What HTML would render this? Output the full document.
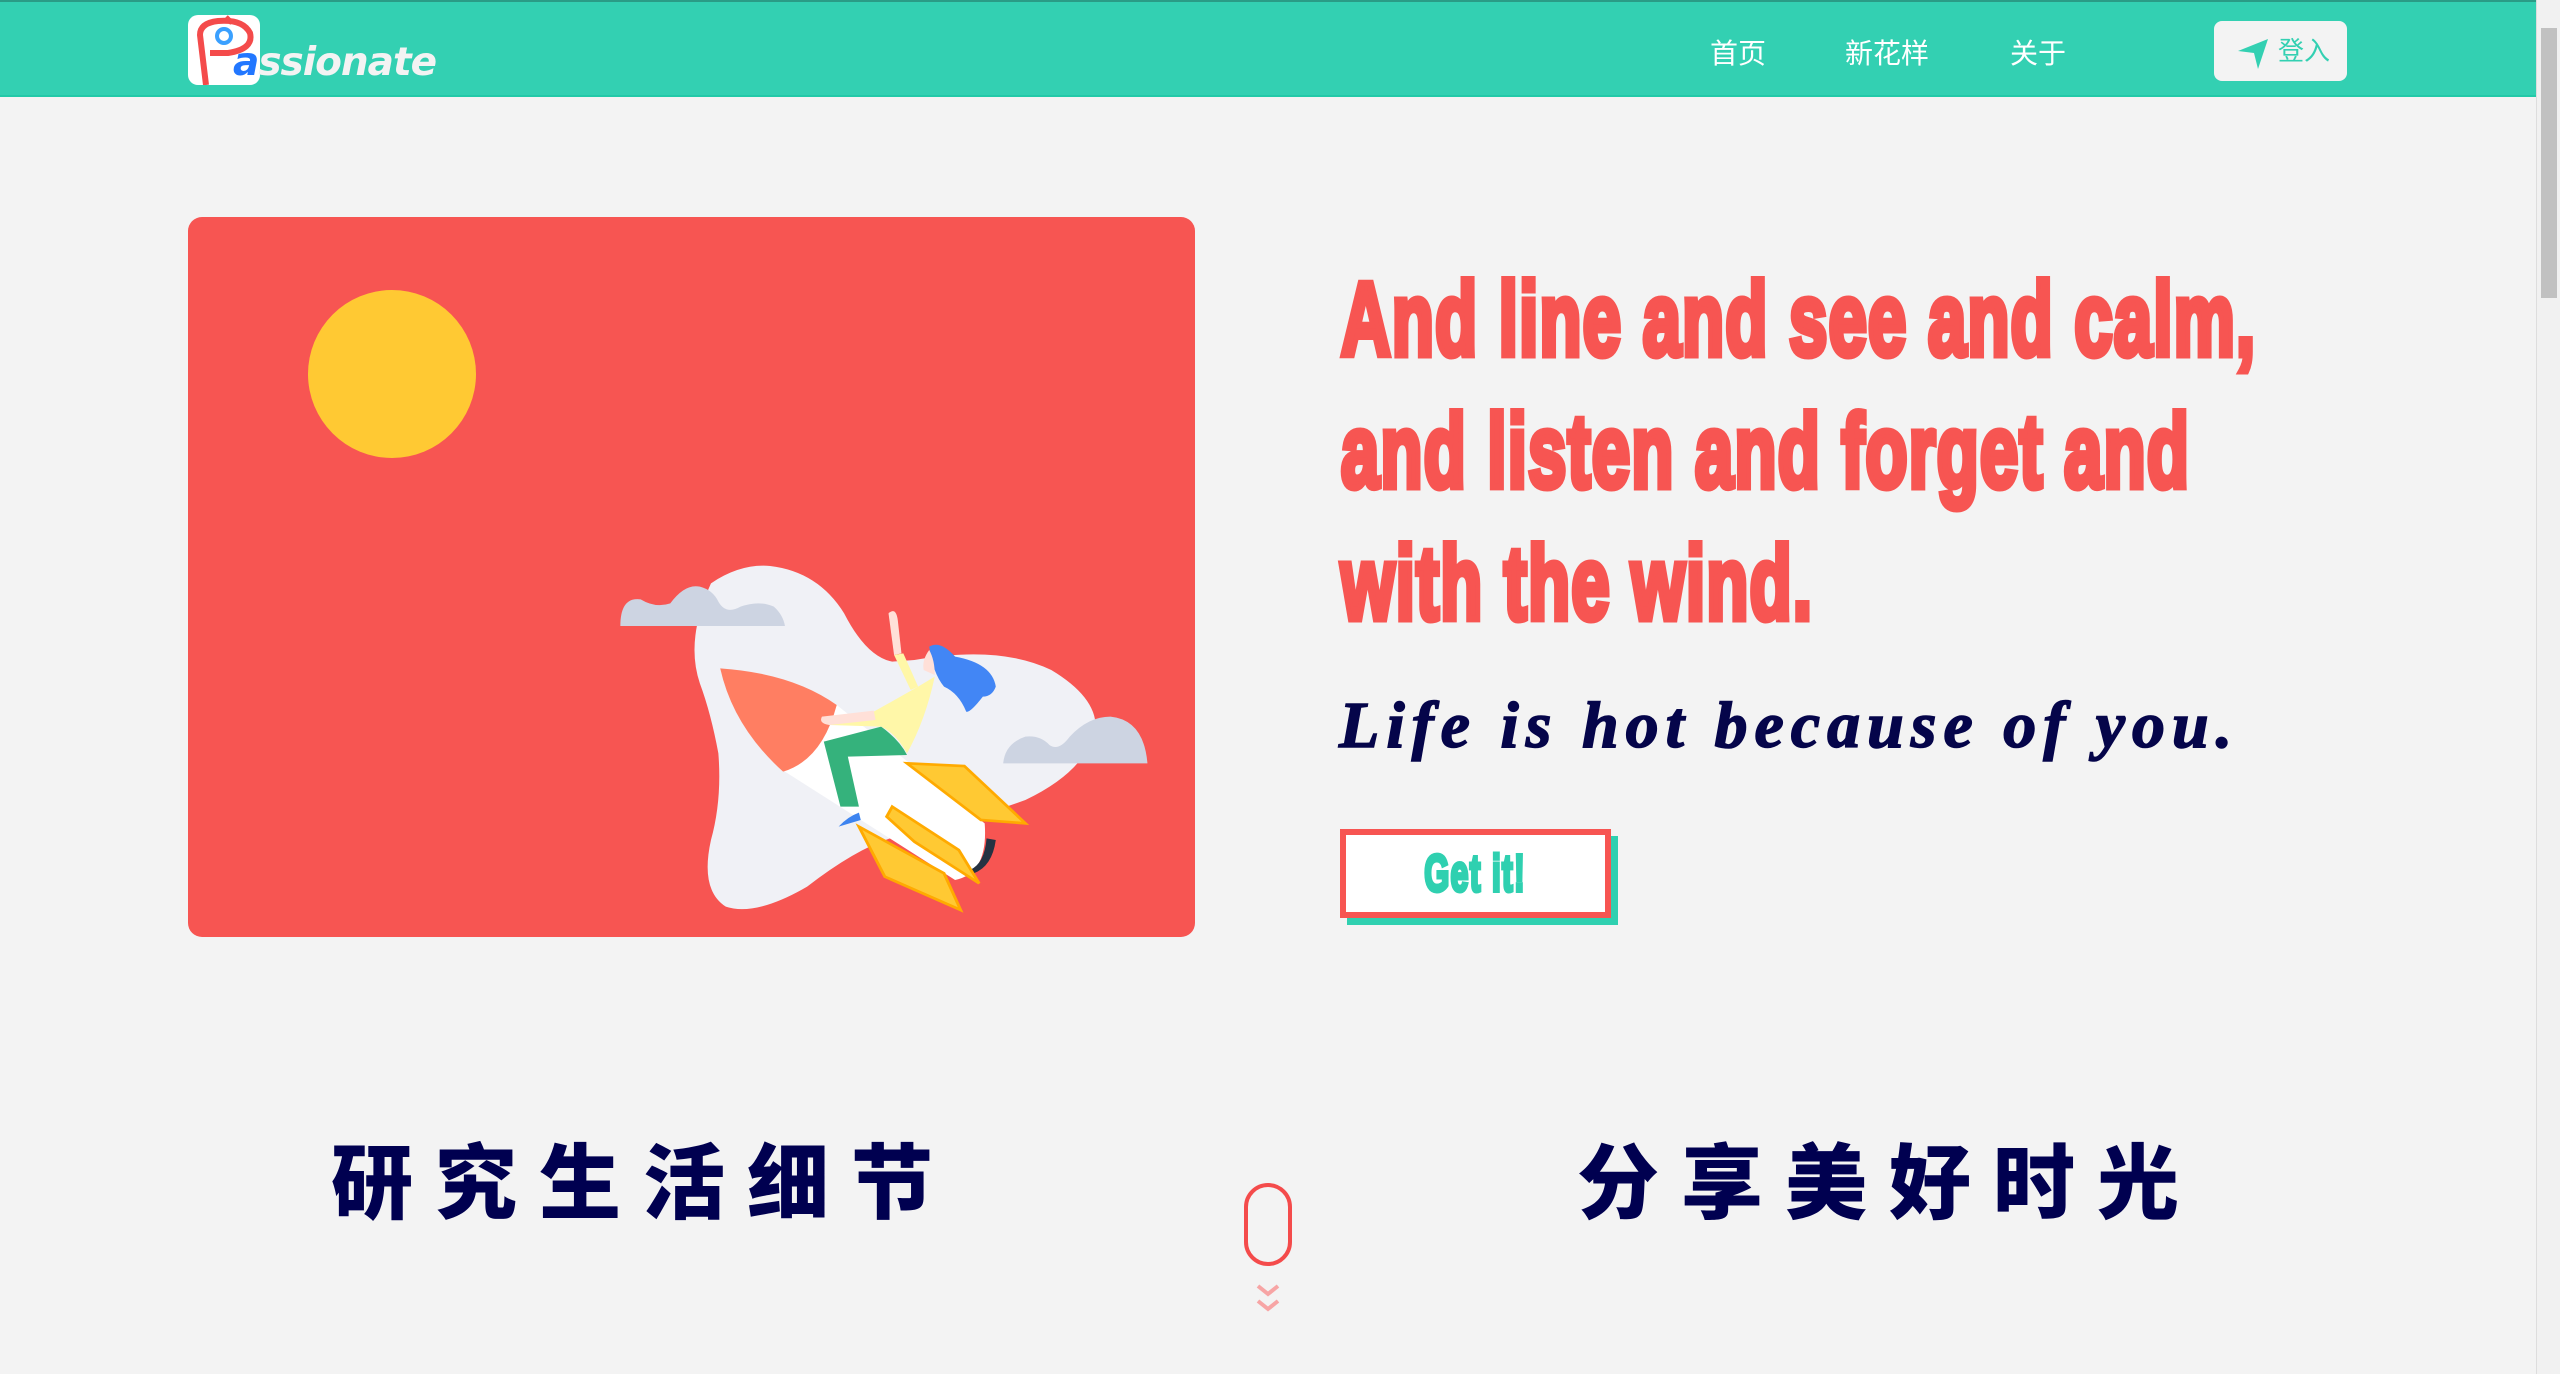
<!DOCTYPE html>
<html><head><meta charset="utf-8"><style>
*{margin:0;padding:0;box-sizing:border-box}
html,body{width:2560px;height:1374px;overflow:hidden;background:#f3f3f3;font-family:"Liberation Sans","Noto Sans CJK SC",sans-serif}
.hdr{position:absolute;left:0;top:0;width:2536px;height:97px;background:#33d0b2;border-top:2px solid #2a9c86;border-bottom:2px solid #22c9a8}
.sb{position:absolute;right:0;top:0;width:24px;height:1374px;background:#f1f1f1;border-left:1px solid #ddd}
.sb i{position:absolute;left:4px;top:28px;width:16px;height:270px;background:#c1c1c1}
.logo{position:absolute;left:188px;top:13px;width:72px;height:70px;background:#fff;border-radius:10px}
.lt{position:absolute;left:233px;top:38px;font-size:39px;font-weight:bold;font-style:italic;color:#f3f3f3;font-family:"DejaVu Sans",sans-serif;letter-spacing:-1px}
.lt b{color:#2277ff}
.nav{position:absolute;top:30px;font-size:28px;color:#fff}
.login{position:absolute;left:2214px;top:19px;width:133px;height:60px;background:#f3f3f3;border-radius:8px;color:#33d0b2;font-size:26px;line-height:60px;padding-left:64px}
.card{position:absolute;left:188px;top:217px;width:1007px;height:720px;background:#f75552;border-radius:14px;overflow:hidden}
.h1{position:absolute;left:1341px;top:254px;font-size:104px;font-weight:900;color:#f75552;line-height:132px;transform:scaleX(0.66);transform-origin:0 0;white-space:nowrap;letter-spacing:2px;-webkit-text-stroke:7px #f75552}
.sub{position:absolute;left:1339px;top:688px;font-family:"Liberation Serif",serif;font-style:italic;font-weight:bold;font-size:66px;color:#05054a;letter-spacing:7px;white-space:nowrap;-webkit-text-stroke:1.5px #05054a}
.btnS{position:absolute;left:1347px;top:836px;width:271px;height:89px;background:#2fd0b0}
.btn{position:absolute;left:1340px;top:829px;width:271px;height:89px;background:#fff;border:6px solid #f75552;text-align:center;color:#2fd0b0;font-size:52px;font-weight:900;line-height:78px}
.btn span{display:inline-block;transform:scaleX(0.62);-webkit-text-stroke:4px #2fd0b0;letter-spacing:2px}
.cn{position:absolute;top:1117px;font-size:82px;font-weight:900;color:#000050;letter-spacing:22px;white-space:nowrap}
.mouse{position:absolute;left:1244px;top:1183px;width:48px;height:83px;border:4px solid #f44b4b;border-radius:24px}
</style></head><body>
<div class="hdr">
<div class="logo"><svg width="72" height="70" viewBox="0 0 72 70"><path d="M18 70 L12 20 Q12 8 30 6 Q55 4 62 18 Q66 34 40 38 L22 38" fill="none" stroke="#f44b4b" stroke-width="6"/><path d="M38 2 l6 6" stroke="#f44b4b" stroke-width="5"/><circle cx="36" cy="21" r="7" fill="none" stroke="#3aa0ff" stroke-width="4"/></svg></div>
<div class="lt"><b>a</b>ssionate</div>
<div class="nav" style="left:1710px">首页</div>
<div class="nav" style="left:1845px">新花样</div>
<div class="nav" style="left:2010px">关于</div>
<div class="login"><svg style="position:absolute;left:24px;top:18px" width="30" height="30" viewBox="0 0 30 30"><path d="M0 12 L30 0 L20 30 L16 14 Z" fill="#33d0b2"/></svg>登入</div>
</div>
<div class="sb"><i></i></div>
<div class="card">
<svg width="1007" height="720" viewBox="0 0 1007 720"><circle cx="204" cy="157" r="84" fill="#ffc933"/></svg>
<svg style="position:absolute;left:412px;top:323px" width="580" height="380" viewBox="0 0 1568 1140" preserveAspectRatio="none">
<path d="M300 130 Q380 70 460 78 Q590 95 660 220 Q720 350 790 365 L850 360 Q1080 315 1220 390 Q1340 470 1340 560 Q1320 690 1150 780 Q950 860 800 890 Q700 920 560 1040 Q420 1130 340 1100 Q270 1050 300 900 Q330 780 320 640 Q300 520 270 430 Q230 300 300 130Z" fill="#f0f1f6"/>
<path d="M55 258 Q55 170 110 178 Q150 205 190 190 Q230 130 270 140 Q305 150 320 185 Q340 225 380 200 Q430 180 470 200 Q495 225 500 258Z" fill="#cdd4e2"/>
<path d="M1090 670 Q1095 610 1150 590 Q1190 585 1215 615 Q1240 635 1270 590 Q1320 530 1380 530 Q1470 540 1480 670Z" fill="#cdd4e2"/>
<path d="M640 495 L1040 850 Q1050 1000 960 1020 L500 695 Q560 560 640 495Z" fill="#fff"/>
<path d="M325 385 Q520 400 640 495 Q600 660 495 695 Q360 560 325 385Z" fill="#ff7e62"/>
<path d="M1010 1000 Q1060 980 1070 900 L1045 895 Q1040 970 1000 990Z" fill="#253242"/>
<path d="M830 670 L985 678 L1150 850 L1030 840Z" fill="#ffc933" stroke="#ffaa00" stroke-width="8"/>
<path d="M700 860 L930 1000 L975 1110 L770 1010Z" fill="#ffc933" stroke="#ffaa00" stroke-width="8"/>
<path d="M790 800 L970 930 L1025 1030 L850 905 L775 830Z" fill="#ffc933" stroke="#ffaa00" stroke-width="8"/>
<path d="M605 605 L760 560 Q810 600 830 645 L670 650 L700 800 L650 800Z" fill="#35b27c"/>
<path d="M645 860 Q670 830 700 818 L705 840Z" fill="#3d84f0"/>
<path d="M600 540 L740 515 L860 440 L905 410 Q880 540 830 640 Q800 580 760 560 L620 555Z" fill="#fff7a8"/>
<path d="M600 530 L740 512 L745 540 L620 555 Q590 550 600 530Z" fill="#ffe0d8"/>
<path d="M780 220 Q800 200 805 240 L815 340 L795 345Z" fill="#ffe0d8"/>
<path d="M795 345 L820 340 L860 440 L840 450Z" fill="#fff7a8"/>
<path d="M890 320 Q920 300 960 350 Q1060 370 1070 440 Q1060 470 1035 470 Q1000 520 990 515 Q970 460 930 440 Q900 400 890 320Z" fill="#4286f5"/>
<path d="M890 330 Q870 360 875 390 L905 405 Q905 360 890 330Z" fill="#ffe0d8"/>
</svg>
</div>
<div class="h1">And line and see and calm,<br>and listen and forget and<br>with the wind.</div>
<div class="sub">Life is hot because of you.</div>
<div class="btnS"></div>
<div class="btn"><span>Get it!</span></div>
<div class="cn" style="left:331px">研究生活细节</div>
<div class="cn" style="left:1577px">分享美好时光</div>
<div class="mouse"></div>
<svg style="position:absolute;left:1256px;top:1284px" width="24" height="32" viewBox="0 0 24 32"><path d="M2 2 L12 10 L22 2 M2 17 L12 25 L22 17" fill="none" stroke="#f7a5a5" stroke-width="4"/></svg>
</body></html>
